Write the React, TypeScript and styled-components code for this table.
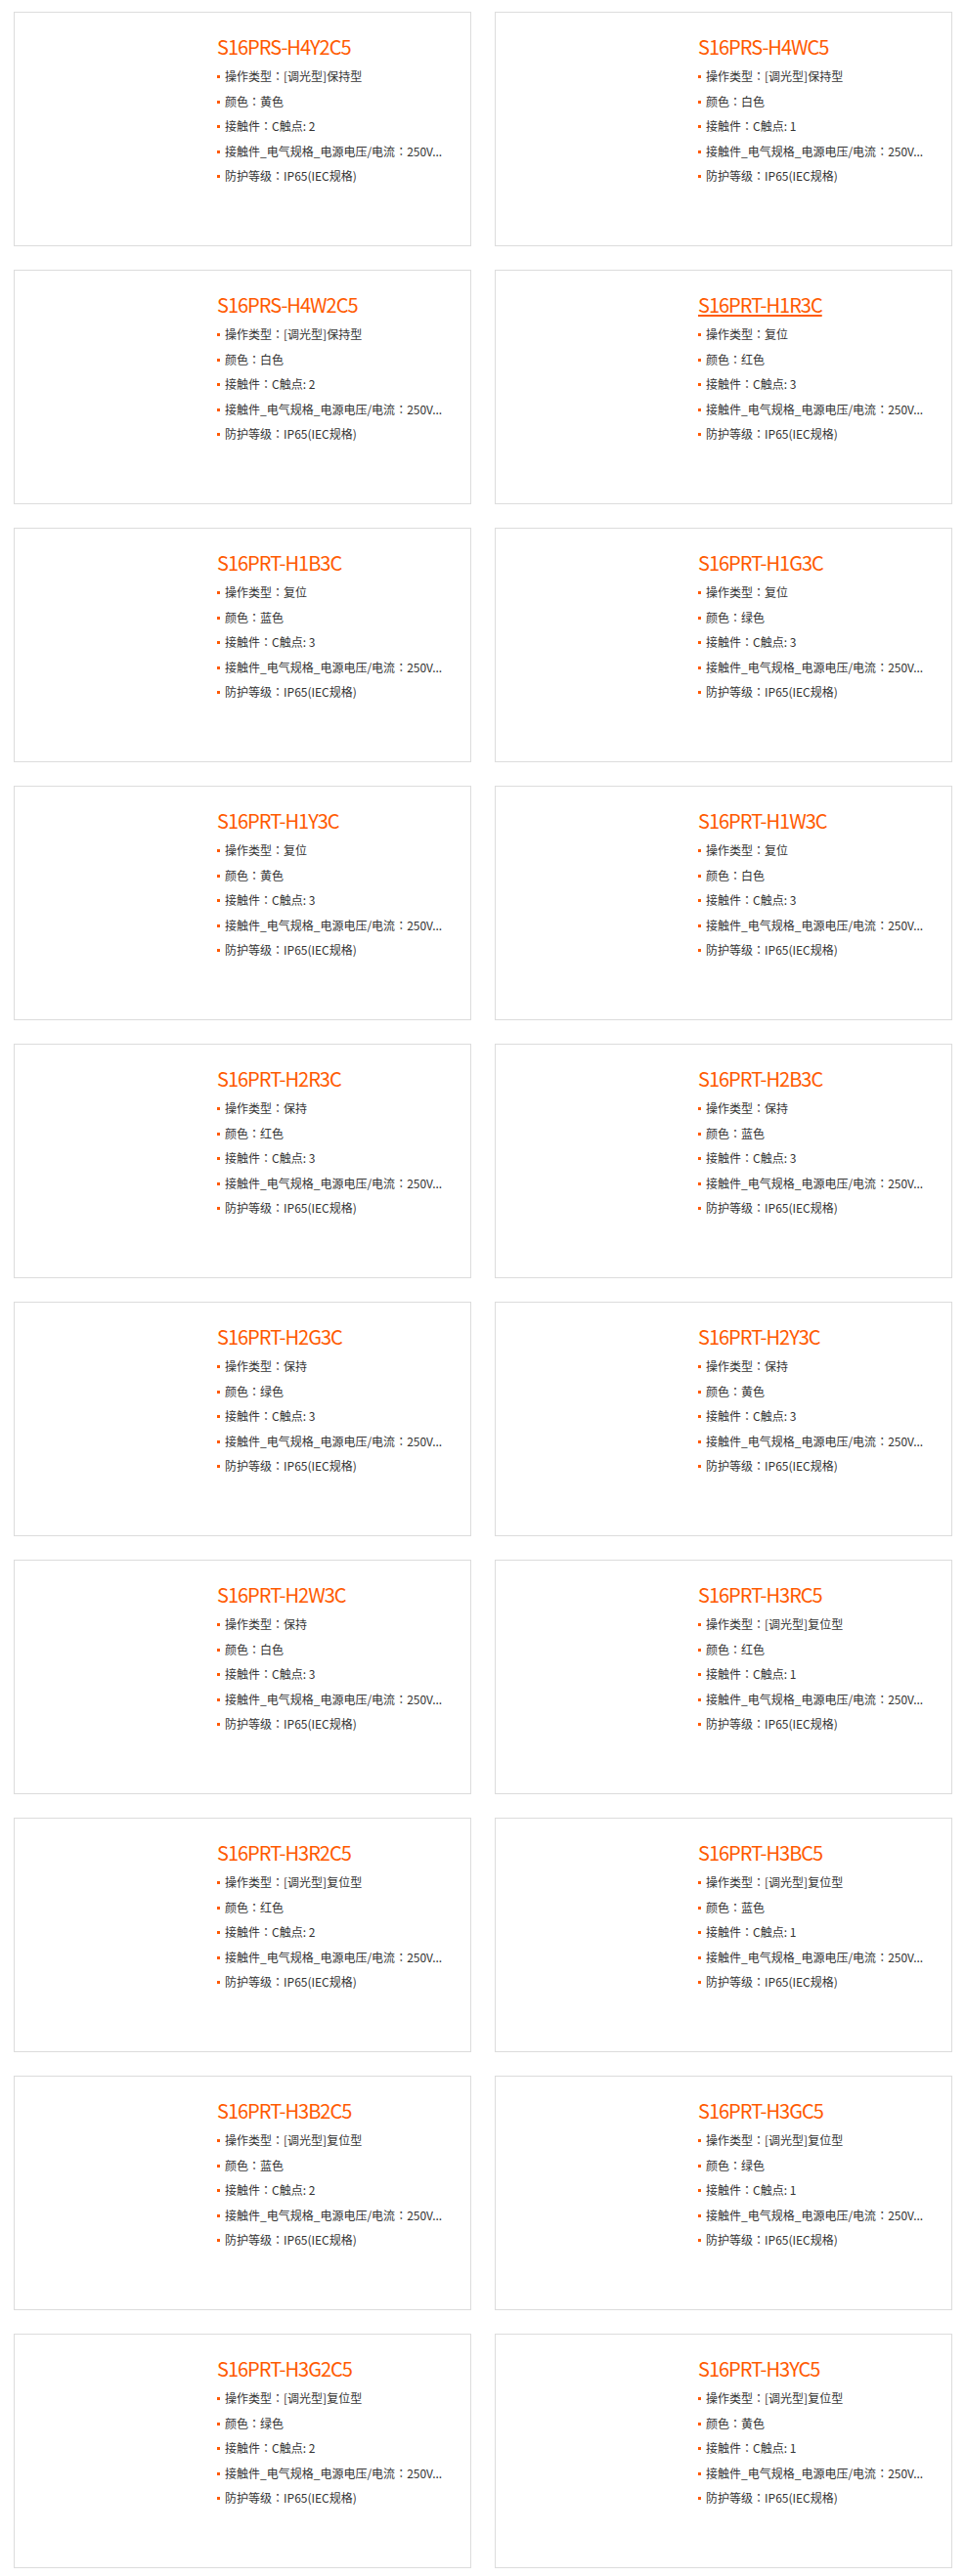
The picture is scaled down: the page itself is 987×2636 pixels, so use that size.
import styled, { createGlobalStyle } from 'styled-components'

type Product = {
  model: string
  action: string
  color: string
  contacts: number
  hovered?: boolean
}

const products: Product[] = [
  { model: 'S16PRS-H4Y2C5', action: '[调光型]保持型', color: '黄色', contacts: 2 },
  { model: 'S16PRS-H4WC5', action: '[调光型]保持型', color: '白色', contacts: 1 },
  { model: 'S16PRS-H4W2C5', action: '[调光型]保持型', color: '白色', contacts: 2 },
  { model: 'S16PRT-H1R3C', action: '复位', color: '红色', contacts: 3, hovered: true },
  { model: 'S16PRT-H1B3C', action: '复位', color: '蓝色', contacts: 3 },
  { model: 'S16PRT-H1G3C', action: '复位', color: '绿色', contacts: 3 },
  { model: 'S16PRT-H1Y3C', action: '复位', color: '黄色', contacts: 3 },
  { model: 'S16PRT-H1W3C', action: '复位', color: '白色', contacts: 3 },
  { model: 'S16PRT-H2R3C', action: '保持', color: '红色', contacts: 3 },
  { model: 'S16PRT-H2B3C', action: '保持', color: '蓝色', contacts: 3 },
  { model: 'S16PRT-H2G3C', action: '保持', color: '绿色', contacts: 3 },
  { model: 'S16PRT-H2Y3C', action: '保持', color: '黄色', contacts: 3 },
  { model: 'S16PRT-H2W3C', action: '保持', color: '白色', contacts: 3 },
  { model: 'S16PRT-H3RC5', action: '[调光型]复位型', color: '红色', contacts: 1 },
  { model: 'S16PRT-H3R2C5', action: '[调光型]复位型', color: '红色', contacts: 2 },
  { model: 'S16PRT-H3BC5', action: '[调光型]复位型', color: '蓝色', contacts: 1 },
  { model: 'S16PRT-H3B2C5', action: '[调光型]复位型', color: '蓝色', contacts: 2 },
  { model: 'S16PRT-H3GC5', action: '[调光型]复位型', color: '绿色', contacts: 1 },
  { model: 'S16PRT-H3G2C5', action: '[调光型]复位型', color: '绿色', contacts: 2 },
  { model: 'S16PRT-H3YC5', action: '[调光型]复位型', color: '黄色', contacts: 1 },
]

// label + centred full-width colon + value
const Spec = ({ label, value }: { label: string; value: string }) => (
  <SpecItem>
    {label}<Colon>：</Colon>{value}
  </SpecItem>
)

const App: React.FC = () => {
  return (
    <>
      <GlobalStyle />
      <ProductGrid>
        {products.map(p => (
          <Card key={p.model}>
            <ImageArea />
            <Info>
              <Title href='#' $hovered={p.hovered}>{p.model}</Title>
              <SpecList>
                <Spec label='操作类型' value={p.action} />
                <Spec label='颜色' value={p.color} />
                <Spec label='接触件' value={`C触点: ${p.contacts}`} />
                <Spec label='接触件_电气规格_电源电压/电流' value='250V...' />
                <Spec label='防护等级' value='IP65(IEC规格)' />
              </SpecList>
            </Info>
          </Card>
        ))}
      </ProductGrid>
    </>
  )
}

export default App

const GlobalStyle = createGlobalStyle`
  body {
    margin: 0;
    background: #fff;
    font-family: "Noto Sans CJK SC", "Noto Sans", sans-serif;
  }
`

const ProductGrid = styled.div`
  display: grid;
  grid-template-columns: 468px 468px;
  column-gap: 24px;
  row-gap: 24px;
  padding: 12px 13px 8px 14px;
`

const Card = styled.div`
  display: flex;
  box-sizing: border-box;
  height: 240px;
  border: 1px solid #dcdcdc;
  background: #fff;
`

const ImageArea = styled.div`
  width: 207px;
  flex-shrink: 0;
`

const Info = styled.div`
  width: 240px;
  padding-top: 23px;
`

const Title = styled.a<{ $hovered?: boolean }>`
  display: block;
  font-size: 20px;
  line-height: 24px;
  letter-spacing: -1px;
  color: #ff5a00;
  text-decoration: ${props => props.$hovered ? 'underline' : 'none'};
  text-underline-offset: 2px;
  margin-bottom: 5px;
`

const SpecList = styled.ul`
  list-style: none;
  margin: 0;
  padding: 0;
`

const SpecItem = styled.li`
  position: relative;
  padding-left: 8px;
  font-size: 12px;
  line-height: 25.6px;
  color: #333;
  white-space: nowrap;

  &::before {
    content: '';
    position: absolute;
    left: 0;
    top: 12px;
    width: 3px;
    height: 3px;
    background: #ff5a00;
  }
`

const Colon = styled.span`
  font-family: "Noto Sans CJK TC", "Noto Sans CJK SC", sans-serif;
`
